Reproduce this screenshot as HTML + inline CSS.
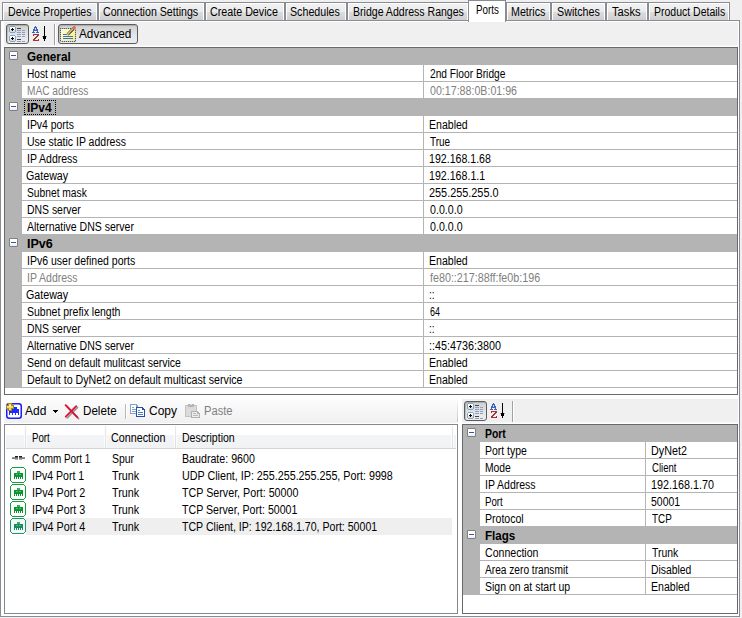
<!DOCTYPE html><html><head><meta charset="utf-8"><style>
*{box-sizing:border-box;margin:0;padding:0}
html,body{width:742px;height:618px;overflow:hidden;background:#f0f0f0;font-family:"Liberation Sans",sans-serif;font-size:12px;color:#000}
.a{position:absolute}
.t{position:absolute;white-space:nowrap;line-height:14px;transform-origin:0 0}
svg{position:absolute;overflow:visible}
</style></head><body>
<div class="a" style="left:2px;top:2px;width:96px;height:19px;border:1px solid #898c95;background:linear-gradient(#f2f2f2 0,#ebebeb 53%,#dddddd 53%,#cfcfcf 100%);box-shadow:inset 1px 1px 0 #fff,inset -1px 0 0 #fff"></div><div class="t" style="left:8px;top:5px;transform:scaleX(0.8811);">Device Properties</div><div class="a" style="left:98px;top:2px;width:107px;height:19px;border:1px solid #898c95;background:linear-gradient(#f2f2f2 0,#ebebeb 53%,#dddddd 53%,#cfcfcf 100%);box-shadow:inset 1px 1px 0 #fff,inset -1px 0 0 #fff"></div><div class="t" style="left:103px;top:5px;transform:scaleX(0.8863);">Connection Settings</div><div class="a" style="left:205px;top:2px;width:80px;height:19px;border:1px solid #898c95;background:linear-gradient(#f2f2f2 0,#ebebeb 53%,#dddddd 53%,#cfcfcf 100%);box-shadow:inset 1px 1px 0 #fff,inset -1px 0 0 #fff"></div><div class="t" style="left:210px;top:5px;transform:scaleX(0.8926);">Create Device</div><div class="a" style="left:285px;top:2px;width:62px;height:19px;border:1px solid #898c95;background:linear-gradient(#f2f2f2 0,#ebebeb 53%,#dddddd 53%,#cfcfcf 100%);box-shadow:inset 1px 1px 0 #fff,inset -1px 0 0 #fff"></div><div class="t" style="left:290px;top:5px;transform:scaleX(0.8899);">Schedules</div><div class="a" style="left:347px;top:2px;width:122px;height:19px;border:1px solid #898c95;background:linear-gradient(#f2f2f2 0,#ebebeb 53%,#dddddd 53%,#cfcfcf 100%);box-shadow:inset 1px 1px 0 #fff,inset -1px 0 0 #fff"></div><div class="t" style="left:353px;top:5px;transform:scaleX(0.8795);">Bridge Address Ranges</div><div class="a" style="left:506px;top:2px;width:45px;height:19px;border:1px solid #898c95;background:linear-gradient(#f2f2f2 0,#ebebeb 53%,#dddddd 53%,#cfcfcf 100%);box-shadow:inset 1px 1px 0 #fff,inset -1px 0 0 #fff"></div><div class="t" style="left:511px;top:5px;transform:scaleX(0.8904);">Metrics</div><div class="a" style="left:551px;top:2px;width:55px;height:19px;border:1px solid #898c95;background:linear-gradient(#f2f2f2 0,#ebebeb 53%,#dddddd 53%,#cfcfcf 100%);box-shadow:inset 1px 1px 0 #fff,inset -1px 0 0 #fff"></div><div class="t" style="left:557px;top:5px;transform:scaleX(0.8925);">Switches</div><div class="a" style="left:606px;top:2px;width:42px;height:19px;border:1px solid #898c95;background:linear-gradient(#f2f2f2 0,#ebebeb 53%,#dddddd 53%,#cfcfcf 100%);box-shadow:inset 1px 1px 0 #fff,inset -1px 0 0 #fff"></div><div class="t" style="left:612px;top:5px;transform:scaleX(0.9322);">Tasks</div><div class="a" style="left:648px;top:2px;width:82px;height:19px;border:1px solid #898c95;background:linear-gradient(#f2f2f2 0,#ebebeb 53%,#dddddd 53%,#cfcfcf 100%);box-shadow:inset 1px 1px 0 #fff,inset -1px 0 0 #fff"></div><div class="t" style="left:654px;top:5px;transform:scaleX(0.8742);">Product Details</div><div class="a" style="left:0;top:20px;width:740px;height:597px;border:1px solid #898c95;background:#fff"></div><div class="a" style="left:468px;top:0;width:38px;height:22px;border:1px solid #898c95;border-bottom:none;background:#fff"></div><div class="t" style="left:476px;top:3px;transform:scaleX(0.8131);">Ports</div><div class="a" style="left:4px;top:22px;width:734px;height:23px;background:#f0f0f0"></div><div class="a" style="left:4px;top:45px;width:734px;height:1px;background:#f3f6fb"></div><div class="a" style="left:6px;top:24px;width:23px;height:20px;border:1px solid #5c5c5c;border-radius:3px;background:linear-gradient(#cfcfcf,#e6e6e6 60%,#ededed);box-shadow:inset 1px 1px 1px rgba(0,0,0,.18)"></div><svg class="a" style="left:6px;top:24px" width="23" height="20" viewBox="0 0 23 20" shape-rendering="crispEdges"><rect x="4" y="2" width="5" height="7" fill="#7fa6cf"/><rect x="3" y="3" width="7" height="5" fill="#7fa6cf"/><rect x="4" y="3" width="5" height="5" fill="#fff"/><rect x="4" y="6" width="5" height="2" fill="#e8dccb"/><rect x="6" y="4" width="1" height="3" fill="#000"/><rect x="5" y="5" width="3" height="1" fill="#000"/><rect x="4" y="11" width="5" height="7" fill="#7fa6cf"/><rect x="3" y="12" width="7" height="5" fill="#7fa6cf"/><rect x="4" y="12" width="5" height="5" fill="#fff"/><rect x="4" y="15" width="5" height="2" fill="#e8dccb"/><rect x="6" y="13" width="1" height="3" fill="#000"/><rect x="5" y="14" width="3" height="1" fill="#000"/><rect x="11" y="4" width="4" height="1" fill="#444"/><rect x="11" y="15" width="4" height="1" fill="#444"/><rect x="11" y="6" width="4" height="1" fill="#8aa0c8"/><rect x="16" y="6" width="3" height="1" fill="#8aa0c8"/><rect x="11" y="8" width="4" height="1" fill="#8aa0c8"/><rect x="16" y="8" width="3" height="1" fill="#8aa0c8"/><rect x="11" y="10" width="4" height="1" fill="#8aa0c8"/><rect x="16" y="10" width="3" height="1" fill="#8aa0c8"/><rect x="11" y="12" width="4" height="1" fill="#8aa0c8"/><rect x="16" y="12" width="3" height="1" fill="#8aa0c8"/><rect x="11" y="17" width="4" height="1" fill="#8aa0c8"/><rect x="16" y="17" width="3" height="1" fill="#8aa0c8"/></svg><svg class="a" style="left:32px;top:26px" width="16" height="16" viewBox="0 0 16 16" shape-rendering="crispEdges"><rect x="3" y="0" width="1" height="1" fill="#3d66bb"/><rect x="2" y="1" width="3" height="1" fill="#3d66bb"/><rect x="2" y="2" width="1" height="1" fill="#3d66bb"/><rect x="4" y="2" width="1" height="1" fill="#3d66bb"/><rect x="1" y="3" width="2" height="1" fill="#3d66bb"/><rect x="4" y="3" width="2" height="1" fill="#3d66bb"/><rect x="1" y="4" width="5" height="1" fill="#3d66bb"/><rect x="1" y="5" width="1" height="1" fill="#3d66bb"/><rect x="5" y="5" width="1" height="1" fill="#3d66bb"/><rect x="0" y="6" width="3" height="1" fill="#3d66bb"/><rect x="4" y="6" width="3" height="1" fill="#3d66bb"/><rect x="3" y="2" width="1" height="1" fill="#c9d4ea"/><rect x="3" y="3" width="1" height="1" fill="#c9d4ea"/><rect x="1" y="8" width="6" height="1" fill="#a33434"/><rect x="5" y="9" width="2" height="1" fill="#a33434"/><rect x="1" y="9" width="1" height="1" fill="#a33434"/><rect x="4" y="10" width="2" height="1" fill="#a33434"/><rect x="3" y="11" width="2" height="1" fill="#a33434"/><rect x="2" y="12" width="2" height="1" fill="#a33434"/><rect x="1" y="13" width="2" height="1" fill="#a33434"/><rect x="6" y="13" width="1" height="1" fill="#a33434"/><rect x="1" y="14" width="6" height="1" fill="#a33434"/><rect x="12" y="0" width="1" height="1" fill="#000"/><rect x="12" y="1" width="1" height="1" fill="#000"/><rect x="12" y="2" width="1" height="1" fill="#000"/><rect x="12" y="3" width="1" height="1" fill="#000"/><rect x="12" y="4" width="1" height="1" fill="#000"/><rect x="12" y="5" width="1" height="1" fill="#000"/><rect x="12" y="6" width="1" height="1" fill="#000"/><rect x="12" y="7" width="1" height="1" fill="#000"/><rect x="12" y="8" width="1" height="1" fill="#000"/><rect x="12" y="9" width="1" height="1" fill="#000"/><rect x="11" y="11" width="3" height="1" fill="#000"/><rect x="11" y="12" width="3" height="1" fill="#000"/><rect x="12" y="13" width="1" height="1" fill="#000"/><rect x="12" y="14" width="1" height="1" fill="#000"/><rect x="11" y="10" width="3" height="1" fill="#000"/><rect x="10" y="10" width="1" height="1" fill="#9a9a9a"/><rect x="14" y="10" width="1" height="1" fill="#9a9a9a"/></svg><div class="a" style="left:54px;top:24px;width:1px;height:21px;background:#a0a0a0;box-shadow:1px 0 0 #fff"></div><div class="a" style="left:58px;top:24px;width:80px;height:20px;border:1px solid #5c5c5c;border-radius:3px;background:linear-gradient(#cfcfcf,#e6e6e6 60%,#ededed);box-shadow:inset 1px 1px 1px rgba(0,0,0,.18)"></div><svg class="a" style="left:60px;top:26px" width="17" height="16" viewBox="0 0 17 16" shape-rendering="crispEdges"><defs><linearGradient id="ny" x1="0" y1="0" x2="1" y2="1"><stop offset="0" stop-color="#ffffd8"/><stop offset="1" stop-color="#f6ee70"/></linearGradient></defs><rect x="1" y="3" width="14" height="12" fill="url(#ny)"/><rect x="0" y="2" width="1" height="1" fill="#4a5a80"/><rect x="0" y="15" width="1" height="1" fill="#4a5a80"/><rect x="2" y="2" width="1" height="1" fill="#4a5a80"/><rect x="2" y="15" width="1" height="1" fill="#4a5a80"/><rect x="4" y="2" width="1" height="1" fill="#4a5a80"/><rect x="4" y="15" width="1" height="1" fill="#4a5a80"/><rect x="6" y="2" width="1" height="1" fill="#4a5a80"/><rect x="6" y="15" width="1" height="1" fill="#4a5a80"/><rect x="8" y="2" width="1" height="1" fill="#4a5a80"/><rect x="8" y="15" width="1" height="1" fill="#4a5a80"/><rect x="10" y="2" width="1" height="1" fill="#4a5a80"/><rect x="10" y="15" width="1" height="1" fill="#4a5a80"/><rect x="12" y="2" width="1" height="1" fill="#4a5a80"/><rect x="12" y="15" width="1" height="1" fill="#4a5a80"/><rect x="14" y="2" width="1" height="1" fill="#4a5a80"/><rect x="14" y="15" width="1" height="1" fill="#4a5a80"/><rect x="0" y="2" width="1" height="1" fill="#4a5a80"/><rect x="15" y="2" width="1" height="1" fill="#4a5a80"/><rect x="0" y="4" width="1" height="1" fill="#4a5a80"/><rect x="15" y="4" width="1" height="1" fill="#4a5a80"/><rect x="0" y="6" width="1" height="1" fill="#4a5a80"/><rect x="15" y="6" width="1" height="1" fill="#4a5a80"/><rect x="0" y="8" width="1" height="1" fill="#4a5a80"/><rect x="15" y="8" width="1" height="1" fill="#4a5a80"/><rect x="0" y="10" width="1" height="1" fill="#4a5a80"/><rect x="15" y="10" width="1" height="1" fill="#4a5a80"/><rect x="0" y="12" width="1" height="1" fill="#4a5a80"/><rect x="15" y="12" width="1" height="1" fill="#4a5a80"/><rect x="0" y="14" width="1" height="1" fill="#4a5a80"/><rect x="15" y="14" width="1" height="1" fill="#4a5a80"/><rect x="1" y="2" width="1" height="1" fill="#b8c0d8"/><rect x="1" y="15" width="1" height="1" fill="#b8c0d8"/><rect x="3" y="2" width="1" height="1" fill="#b8c0d8"/><rect x="3" y="15" width="1" height="1" fill="#b8c0d8"/><rect x="5" y="2" width="1" height="1" fill="#b8c0d8"/><rect x="5" y="15" width="1" height="1" fill="#b8c0d8"/><rect x="7" y="2" width="1" height="1" fill="#b8c0d8"/><rect x="7" y="15" width="1" height="1" fill="#b8c0d8"/><rect x="9" y="2" width="1" height="1" fill="#b8c0d8"/><rect x="9" y="15" width="1" height="1" fill="#b8c0d8"/><rect x="11" y="2" width="1" height="1" fill="#b8c0d8"/><rect x="11" y="15" width="1" height="1" fill="#b8c0d8"/><rect x="13" y="2" width="1" height="1" fill="#b8c0d8"/><rect x="13" y="15" width="1" height="1" fill="#b8c0d8"/><rect x="15" y="2" width="1" height="1" fill="#b8c0d8"/><rect x="15" y="15" width="1" height="1" fill="#b8c0d8"/><rect x="0" y="3" width="1" height="1" fill="#b8c0d8"/><rect x="15" y="3" width="1" height="1" fill="#b8c0d8"/><rect x="0" y="5" width="1" height="1" fill="#b8c0d8"/><rect x="15" y="5" width="1" height="1" fill="#b8c0d8"/><rect x="0" y="7" width="1" height="1" fill="#b8c0d8"/><rect x="15" y="7" width="1" height="1" fill="#b8c0d8"/><rect x="0" y="9" width="1" height="1" fill="#b8c0d8"/><rect x="15" y="9" width="1" height="1" fill="#b8c0d8"/><rect x="0" y="11" width="1" height="1" fill="#b8c0d8"/><rect x="15" y="11" width="1" height="1" fill="#b8c0d8"/><rect x="0" y="13" width="1" height="1" fill="#b8c0d8"/><rect x="15" y="13" width="1" height="1" fill="#b8c0d8"/><rect x="0" y="15" width="1" height="1" fill="#b8c0d8"/><rect x="15" y="15" width="1" height="1" fill="#b8c0d8"/><rect x="3" y="8" width="5" height="1" fill="#3b6fd8"/><rect x="3" y="10" width="10" height="1" fill="#3b6fd8"/><rect x="3" y="12" width="10" height="1" fill="#3b6fd8"/></svg><svg class="a" style="left:60px;top:26px" width="17" height="16" viewBox="0 0 17 16"><path d="M7.6 8.4 L13.6 2.4" stroke="#1a1a1a" stroke-width="2.8"/><path d="M7.9 7.9 L13.2 2.6" stroke="#dcc46a" stroke-width="1.5"/><path d="M7.2 8.8 L9 7" stroke="#c8c8c8" stroke-width="1.6"/><circle cx="14.2" cy="1.8" r="1.8" fill="#e0705a"/></svg><div class="t" style="left:79px;top:27px;transform:scaleX(0.9810);">Advanced</div><div class="a" style="left:4px;top:47px;width:734px;height:348px;border:1px solid #696969;background:#fff"></div><div class="a" style="left:5px;top:48px;width:17px;height:340px;background:#b4b4b4"></div><div class="a" style="left:5px;top:48px;width:732px;height:17px;background:#b4b4b4"></div><div class="a" style="left:9px;top:51px;width:9px;height:9px;border:1px solid #808080;border-radius:1px;background:linear-gradient(#fff 60%,#e9e9e9)"></div><div class="a" style="left:11px;top:55px;width:5px;height:1px;background:#3a55a5"></div><div class="t" style="left:27px;top:50px;transform:scaleX(0.9770);font-weight:bold;">General</div><div class="a" style="left:22px;top:81px;width:715px;height:1px;background:#b4b4b4"></div><div class="a" style="left:423px;top:65px;width:1px;height:16px;background:#b4b4b4"></div><div class="t" style="left:27px;top:67px;transform:scaleX(0.8407);">Host name</div><div class="t" style="left:430px;top:67px;transform:scaleX(0.8499);">2nd Floor Bridge</div><div class="a" style="left:22px;top:98px;width:715px;height:1px;background:#b4b4b4"></div><div class="a" style="left:423px;top:82px;width:1px;height:16px;background:#b4b4b4"></div><div class="t" style="left:27px;top:84px;transform:scaleX(0.8440);color:#808080;">MAC address</div><div class="t" style="left:430px;top:84px;transform:scaleX(0.8872);color:#808080;">00:17:88:0B:01:96</div><div class="a" style="left:5px;top:99px;width:732px;height:17px;background:#b4b4b4"></div><div class="a" style="left:9px;top:102px;width:9px;height:9px;border:1px solid #808080;border-radius:1px;background:linear-gradient(#fff 60%,#e9e9e9)"></div><div class="a" style="left:11px;top:106px;width:5px;height:1px;background:#3a55a5"></div><div class="t" style="left:27px;top:101px;transform:scaleX(1.0000);font-weight:bold;">IPv4</div><div class="a" style="left:24px;top:100px;width:32px;height:15px;border:1px dotted #000"></div><div class="a" style="left:22px;top:132px;width:715px;height:1px;background:#b4b4b4"></div><div class="a" style="left:423px;top:116px;width:1px;height:16px;background:#b4b4b4"></div><div class="t" style="left:27px;top:118px;transform:scaleX(0.8671);">IPv4 ports</div><div class="t" style="left:429px;top:118px;transform:scaleX(0.8795);">Enabled</div><div class="a" style="left:22px;top:149px;width:715px;height:1px;background:#b4b4b4"></div><div class="a" style="left:423px;top:133px;width:1px;height:16px;background:#b4b4b4"></div><div class="t" style="left:27px;top:135px;transform:scaleX(0.8744);">Use static IP address</div><div class="t" style="left:430px;top:135px;transform:scaleX(0.8298);">True</div><div class="a" style="left:22px;top:166px;width:715px;height:1px;background:#b4b4b4"></div><div class="a" style="left:423px;top:150px;width:1px;height:16px;background:#b4b4b4"></div><div class="t" style="left:27px;top:152px;transform:scaleX(0.8739);">IP Address</div><div class="t" style="left:429px;top:152px;transform:scaleX(0.8832);">192.168.1.68</div><div class="a" style="left:22px;top:183px;width:715px;height:1px;background:#b4b4b4"></div><div class="a" style="left:423px;top:167px;width:1px;height:16px;background:#b4b4b4"></div><div class="t" style="left:26px;top:169px;transform:scaleX(0.8901);">Gateway</div><div class="t" style="left:429px;top:169px;transform:scaleX(0.8862);">192.168.1.1</div><div class="a" style="left:22px;top:200px;width:715px;height:1px;background:#b4b4b4"></div><div class="a" style="left:423px;top:184px;width:1px;height:16px;background:#b4b4b4"></div><div class="t" style="left:27px;top:186px;transform:scaleX(0.8540);">Subnet mask</div><div class="t" style="left:429px;top:186px;transform:scaleX(0.9060);">255.255.255.0</div><div class="a" style="left:22px;top:217px;width:715px;height:1px;background:#b4b4b4"></div><div class="a" style="left:423px;top:201px;width:1px;height:16px;background:#b4b4b4"></div><div class="t" style="left:27px;top:203px;transform:scaleX(0.8678);">DNS server</div><div class="t" style="left:430px;top:203px;transform:scaleX(0.8873);">0.0.0.0</div><div class="a" style="left:22px;top:234px;width:715px;height:1px;background:#b4b4b4"></div><div class="a" style="left:423px;top:218px;width:1px;height:16px;background:#b4b4b4"></div><div class="t" style="left:27px;top:220px;transform:scaleX(0.8765);">Alternative DNS server</div><div class="t" style="left:430px;top:220px;transform:scaleX(0.8873);">0.0.0.0</div><div class="a" style="left:5px;top:235px;width:732px;height:17px;background:#b4b4b4"></div><div class="a" style="left:9px;top:238px;width:9px;height:9px;border:1px solid #808080;border-radius:1px;background:linear-gradient(#fff 60%,#e9e9e9)"></div><div class="a" style="left:11px;top:242px;width:5px;height:1px;background:#3a55a5"></div><div class="t" style="left:27px;top:237px;transform:scaleX(1.0444);font-weight:bold;">IPv6</div><div class="a" style="left:22px;top:268px;width:715px;height:1px;background:#b4b4b4"></div><div class="a" style="left:423px;top:252px;width:1px;height:16px;background:#b4b4b4"></div><div class="t" style="left:27px;top:254px;transform:scaleX(0.8765);">IPv6 user defined ports</div><div class="t" style="left:429px;top:254px;transform:scaleX(0.8795);">Enabled</div><div class="a" style="left:22px;top:285px;width:715px;height:1px;background:#b4b4b4"></div><div class="a" style="left:423px;top:269px;width:1px;height:16px;background:#b4b4b4"></div><div class="t" style="left:27px;top:271px;transform:scaleX(0.8739);color:#808080;">IP Address</div><div class="t" style="left:430px;top:271px;transform:scaleX(0.8939);color:#808080;">fe80::217:88ff:fe0b:196</div><div class="a" style="left:22px;top:302px;width:715px;height:1px;background:#b4b4b4"></div><div class="a" style="left:423px;top:286px;width:1px;height:16px;background:#b4b4b4"></div><div class="t" style="left:26px;top:288px;transform:scaleX(0.8901);">Gateway</div><div class="t" style="left:429px;top:288px;transform:scaleX(0.8469);">::</div><div class="a" style="left:22px;top:319px;width:715px;height:1px;background:#b4b4b4"></div><div class="a" style="left:423px;top:303px;width:1px;height:16px;background:#b4b4b4"></div><div class="t" style="left:27px;top:305px;transform:scaleX(0.8756);">Subnet prefix length</div><div class="t" style="left:430px;top:305px;transform:scaleX(0.7474);">64</div><div class="a" style="left:22px;top:336px;width:715px;height:1px;background:#b4b4b4"></div><div class="a" style="left:423px;top:320px;width:1px;height:16px;background:#b4b4b4"></div><div class="t" style="left:27px;top:322px;transform:scaleX(0.8678);">DNS server</div><div class="t" style="left:429px;top:322px;transform:scaleX(0.8469);">::</div><div class="a" style="left:22px;top:353px;width:715px;height:1px;background:#b4b4b4"></div><div class="a" style="left:423px;top:337px;width:1px;height:16px;background:#b4b4b4"></div><div class="t" style="left:27px;top:339px;transform:scaleX(0.8765);">Alternative DNS server</div><div class="t" style="left:429px;top:339px;transform:scaleX(0.8981);">::45:4736:3800</div><div class="a" style="left:22px;top:370px;width:715px;height:1px;background:#b4b4b4"></div><div class="a" style="left:423px;top:354px;width:1px;height:16px;background:#b4b4b4"></div><div class="t" style="left:27px;top:356px;transform:scaleX(0.8739);">Send on default mulitcast service</div><div class="t" style="left:429px;top:356px;transform:scaleX(0.8795);">Enabled</div><div class="a" style="left:22px;top:387px;width:715px;height:1px;background:#b4b4b4"></div><div class="a" style="left:423px;top:371px;width:1px;height:16px;background:#b4b4b4"></div><div class="t" style="left:27px;top:373px;transform:scaleX(0.8877);">Default to DyNet2 on default multicast service</div><div class="t" style="left:429px;top:373px;transform:scaleX(0.8795);">Enabled</div><div class="a" style="left:4px;top:399px;width:454px;height:24px;background:linear-gradient(#fcfcfc,#f0f0f0);border-top-right-radius:3px;border-bottom-right-radius:3px"></div><div class="a" style="left:457px;top:401px;width:1px;height:21px;background:linear-gradient(#f4f4f4,#c4c4c4)"></div><svg class="a" style="left:6px;top:403px" width="16" height="16" viewBox="0 0 16 16"><rect x="0.75" y="0.75" width="14.5" height="14.5" rx="2.5" fill="#fff" stroke="#1b1bff" stroke-width="1.5"/></svg><svg class="a" style="left:6px;top:403px" width="16" height="16" viewBox="0 0 16 16" shape-rendering="crispEdges"><rect x="3" y="6" width="10" height="4" fill="#1a2cff"/><rect x="8" y="4" width="3" height="2" fill="#1a2cff"/><rect x="3" y="10" width="1" height="2" fill="#1a2cff"/><rect x="6" y="10" width="1" height="2" fill="#1a2cff"/><rect x="9" y="10" width="1" height="2" fill="#1a2cff"/><rect x="12" y="10" width="1" height="2" fill="#1a2cff"/><path d="M2 0h4v2h2v4h-2v2h-4v-2h-2v-4h2z" fill="#a88a10"/><path d="M3 1h2v2h2v2h-2v2h-2v-2h-2v-2h2z" fill="#f2dc5a"/><rect x="3" y="2" width="2" height="2" fill="#fff6c0"/></svg><div class="t" style="left:25px;top:404px;transform:scaleX(1.0000);">Add</div><svg class="a" style="left:53px;top:410px" width="5" height="3" shape-rendering="crispEdges"><rect x="0" y="0" width="5" height="1"/><rect x="1" y="1" width="3" height="1"/><rect x="2" y="2" width="1" height="1"/></svg><svg class="a" style="left:64px;top:404px" width="16" height="16" viewBox="0 0 16 16"><path d="M2.2 1.6 L13.8 13.8 M12.8 2.6 L2.4 13.2" stroke="#6a6a6a" stroke-width="1.6" stroke-linecap="round" transform="translate(0.8,0.8)" opacity=".7"/><path d="M1.6 1.2 L13.2 13.2 M12.2 2.2 L1.8 12.6" stroke="#e0103c" stroke-width="1.9" stroke-linecap="round"/></svg><div class="t" style="left:83px;top:404px;transform:scaleX(0.9692);">Delete</div><div class="a" style="left:125px;top:404px;width:1px;height:15px;background:#b8b8b8;box-shadow:1px 0 0 #fff"></div><svg class="a" style="left:130px;top:404px" width="16" height="16" viewBox="0 0 16 16" shape-rendering="crispEdges"><path d="M0 0h6l2 2v8h-8z" fill="#8da0bd"/><path d="M1 1h5v2h1v6h-6z" fill="#fff"/><rect x="2" y="3" width="2" height="1" fill="#78a4e0"/><rect x="2" y="5" width="4" height="1" fill="#78a4e0"/><rect x="2" y="7" width="4" height="1" fill="#78a4e0"/><path d="M6 3h6l3 3v7h-9z" fill="#2a4ea8"/><path d="M7 4h5v2h2v6h-7z" fill="#fff"/><rect x="8" y="6" width="2" height="1" fill="#5a8ee0"/><rect x="8" y="8" width="5" height="1" fill="#4a7ed8"/><rect x="8" y="10" width="5" height="1" fill="#4a7ed8"/></svg><div class="t" style="left:149px;top:404px;transform:scaleX(1.0000);">Copy</div><svg class="a" style="left:185px;top:404px" width="16" height="16" viewBox="0 0 16 16" shape-rendering="crispEdges"><rect x="0" y="1" width="12" height="12" fill="#c4c4c4"/><rect x="1" y="2" width="10" height="10" fill="#dadada"/><rect x="3" y="0" width="6" height="3" fill="#b4b4b4"/><rect x="5" y="0" width="2" height="1" fill="#e0e0e0"/><path d="M6 7h6l3 3v4h-9z" fill="#b0b0b0"/><path d="M7 8h5v2h2v3h-7z" fill="#ececec"/><rect x="8" y="9" width="3" height="1" fill="#b8b8b8"/><rect x="8" y="11" width="5" height="1" fill="#b8b8b8"/></svg><div class="t" style="left:204px;top:404px;transform:scaleX(0.9298);color:#7f7f7f;">Paste</div><div class="a" style="left:4px;top:424px;width:454px;height:190px;border:1px solid #828790;background:#fff"></div><div class="a" style="left:6px;top:425px;width:450px;height:24px;background:linear-gradient(#fff 0,#fff 44%,#f3f4f6 44%,#f1f2f4 100%);border-bottom:1px solid #d5d5d5"></div><div class="a" style="left:25px;top:426px;width:1px;height:22px;background:linear-gradient(#ececec,#dcdde0);box-shadow:1px 0 0 #fcfcfc,-1px 0 0 #fcfcfc"></div><div class="a" style="left:105px;top:426px;width:1px;height:22px;background:linear-gradient(#ececec,#dcdde0);box-shadow:1px 0 0 #fcfcfc,-1px 0 0 #fcfcfc"></div><div class="a" style="left:175px;top:426px;width:1px;height:22px;background:linear-gradient(#ececec,#dcdde0);box-shadow:1px 0 0 #fcfcfc,-1px 0 0 #fcfcfc"></div><div class="a" style="left:452px;top:426px;width:1px;height:22px;background:linear-gradient(#ececec,#dcdde0);box-shadow:1px 0 0 #fcfcfc,-1px 0 0 #fcfcfc"></div><div class="t" style="left:32px;top:431px;transform:scaleX(0.8049);">Port</div><div class="t" style="left:111px;top:431px;transform:scaleX(0.8974);">Connection</div><div class="t" style="left:182px;top:431px;transform:scaleX(0.8783);">Description</div><div class="a" style="left:26px;top:518px;width:426px;height:17px;background:#efefef"></div><div class="t" style="left:32px;top:452px;transform:scaleX(0.8251);">Comm Port 1</div><div class="t" style="left:112px;top:452px;transform:scaleX(0.8723);">Spur</div><div class="t" style="left:182px;top:452px;transform:scaleX(0.8882);">Baudrate: 9600</div><svg class="a" style="left:12px;top:455px" width="14" height="6" viewBox="0 0 14 6" shape-rendering="crispEdges"><rect x="3" y="1" width="3" height="1" fill="#1e1e1e"/><rect x="3" y="2" width="3" height="1" fill="#5a5a5a"/><rect x="3" y="3" width="3" height="1" fill="#8a8a8a"/><rect x="3" y="4" width="3" height="1" fill="#a8a8a8"/><rect x="7" y="1" width="3" height="1" fill="#1e1e1e"/><rect x="7" y="2" width="3" height="1" fill="#5a5a5a"/><rect x="7" y="3" width="3" height="1" fill="#8a8a8a"/><rect x="7" y="4" width="3" height="1" fill="#a8a8a8"/><rect x="0" y="2" width="3" height="1" fill="#9a9a9a"/><rect x="0" y="3" width="3" height="1" fill="#7a7a7a"/><rect x="10" y="2" width="3" height="1" fill="#9a9a9a"/><rect x="10" y="3" width="3" height="1" fill="#7a7a7a"/></svg><div class="t" style="left:32px;top:469px;transform:scaleX(0.8783);">IPv4 Port 1</div><div class="t" style="left:112px;top:469px;transform:scaleX(0.8983);">Trunk</div><div class="t" style="left:182px;top:469px;transform:scaleX(0.8934);">UDP Client, IP: 255.255.255.255, Port: 9998</div><svg class="a" style="left:10px;top:467px" width="16" height="16" viewBox="0 0 16 16" shape-rendering="crispEdges"><rect x="1" y="1" width="14" height="14" fill="#fff"/><rect x="2" y="0" width="12" height="1" fill="#12a03a"/><rect x="2" y="15" width="12" height="1" fill="#12a03a"/><rect x="0" y="2" width="1" height="12" fill="#12a03a"/><rect x="15" y="2" width="1" height="12" fill="#12a03a"/><rect x="1" y="1" width="1" height="1" fill="#12a03a"/><rect x="14" y="1" width="1" height="1" fill="#12a03a"/><rect x="1" y="14" width="1" height="1" fill="#12a03a"/><rect x="14" y="14" width="1" height="1" fill="#12a03a"/><rect x="4" y="6" width="9" height="4" fill="#0d9432"/><rect x="7" y="4" width="3" height="2" fill="#3cb060"/><rect x="4" y="10" width="1" height="2" fill="#0d9432"/><rect x="6" y="10" width="1" height="2" fill="#0d9432"/><rect x="8" y="10" width="1" height="2" fill="#0d9432"/><rect x="10" y="10" width="1" height="2" fill="#0d9432"/><rect x="12" y="10" width="1" height="2" fill="#0d9432"/><rect x="6" y="7" width="2" height="1" fill="#4cc070"/><rect x="9" y="7" width="2" height="1" fill="#4cc070"/></svg><div class="t" style="left:32px;top:486px;transform:scaleX(0.8957);">IPv4 Port 2</div><div class="t" style="left:112px;top:486px;transform:scaleX(0.8983);">Trunk</div><div class="t" style="left:182px;top:486px;transform:scaleX(0.8919);">TCP Server, Port: 50000</div><svg class="a" style="left:10px;top:484px" width="16" height="16" viewBox="0 0 16 16" shape-rendering="crispEdges"><rect x="1" y="1" width="14" height="14" fill="#fff"/><rect x="2" y="0" width="12" height="1" fill="#12a03a"/><rect x="2" y="15" width="12" height="1" fill="#12a03a"/><rect x="0" y="2" width="1" height="12" fill="#12a03a"/><rect x="15" y="2" width="1" height="12" fill="#12a03a"/><rect x="1" y="1" width="1" height="1" fill="#12a03a"/><rect x="14" y="1" width="1" height="1" fill="#12a03a"/><rect x="1" y="14" width="1" height="1" fill="#12a03a"/><rect x="14" y="14" width="1" height="1" fill="#12a03a"/><rect x="4" y="6" width="9" height="4" fill="#0d9432"/><rect x="7" y="4" width="3" height="2" fill="#3cb060"/><rect x="4" y="10" width="1" height="2" fill="#0d9432"/><rect x="6" y="10" width="1" height="2" fill="#0d9432"/><rect x="8" y="10" width="1" height="2" fill="#0d9432"/><rect x="10" y="10" width="1" height="2" fill="#0d9432"/><rect x="12" y="10" width="1" height="2" fill="#0d9432"/><rect x="6" y="7" width="2" height="1" fill="#4cc070"/><rect x="9" y="7" width="2" height="1" fill="#4cc070"/></svg><div class="t" style="left:32px;top:503px;transform:scaleX(0.8957);">IPv4 Port 3</div><div class="t" style="left:112px;top:503px;transform:scaleX(0.8983);">Trunk</div><div class="t" style="left:182px;top:503px;transform:scaleX(0.8842);">TCP Server, Port: 50001</div><svg class="a" style="left:10px;top:501px" width="16" height="16" viewBox="0 0 16 16" shape-rendering="crispEdges"><rect x="1" y="1" width="14" height="14" fill="#fff"/><rect x="2" y="0" width="12" height="1" fill="#12a03a"/><rect x="2" y="15" width="12" height="1" fill="#12a03a"/><rect x="0" y="2" width="1" height="12" fill="#12a03a"/><rect x="15" y="2" width="1" height="12" fill="#12a03a"/><rect x="1" y="1" width="1" height="1" fill="#12a03a"/><rect x="14" y="1" width="1" height="1" fill="#12a03a"/><rect x="1" y="14" width="1" height="1" fill="#12a03a"/><rect x="14" y="14" width="1" height="1" fill="#12a03a"/><rect x="4" y="6" width="9" height="4" fill="#0d9432"/><rect x="7" y="4" width="3" height="2" fill="#3cb060"/><rect x="4" y="10" width="1" height="2" fill="#0d9432"/><rect x="6" y="10" width="1" height="2" fill="#0d9432"/><rect x="8" y="10" width="1" height="2" fill="#0d9432"/><rect x="10" y="10" width="1" height="2" fill="#0d9432"/><rect x="12" y="10" width="1" height="2" fill="#0d9432"/><rect x="6" y="7" width="2" height="1" fill="#4cc070"/><rect x="9" y="7" width="2" height="1" fill="#4cc070"/></svg><div class="t" style="left:32px;top:520px;transform:scaleX(0.8957);">IPv4 Port 4</div><div class="t" style="left:112px;top:520px;transform:scaleX(0.8983);">Trunk</div><div class="t" style="left:182px;top:520px;transform:scaleX(0.8821);">TCP Client, IP: 192.168.1.70, Port: 50001</div><svg class="a" style="left:10px;top:518px" width="16" height="16" viewBox="0 0 16 16" shape-rendering="crispEdges"><rect x="1" y="1" width="14" height="14" fill="#f3f7fc"/><rect x="2" y="0" width="12" height="1" fill="#1a9a6a"/><rect x="2" y="15" width="12" height="1" fill="#1a9a6a"/><rect x="0" y="2" width="1" height="12" fill="#1a9a6a"/><rect x="15" y="2" width="1" height="12" fill="#1a9a6a"/><rect x="1" y="1" width="1" height="1" fill="#1a9a6a"/><rect x="14" y="1" width="1" height="1" fill="#1a9a6a"/><rect x="1" y="14" width="1" height="1" fill="#1a9a6a"/><rect x="14" y="14" width="1" height="1" fill="#1a9a6a"/><rect x="4" y="6" width="9" height="4" fill="#1a8a5a"/><rect x="7" y="4" width="3" height="2" fill="#3cb060"/><rect x="4" y="10" width="1" height="2" fill="#1a8a5a"/><rect x="6" y="10" width="1" height="2" fill="#1a8a5a"/><rect x="8" y="10" width="1" height="2" fill="#1a8a5a"/><rect x="10" y="10" width="1" height="2" fill="#1a8a5a"/><rect x="12" y="10" width="1" height="2" fill="#1a8a5a"/><rect x="6" y="7" width="2" height="1" fill="#4cc070"/><rect x="9" y="7" width="2" height="1" fill="#4cc070"/></svg><div class="a" style="left:462px;top:399px;width:276px;height:23px;background:#f0f0f0"></div><div class="a" style="left:462px;top:422px;width:276px;height:1px;background:#f3f6fb"></div><div class="a" style="left:464px;top:401px;width:23px;height:20px;border:1px solid #5c5c5c;border-radius:3px;background:linear-gradient(#cfcfcf,#e6e6e6 60%,#ededed);box-shadow:inset 1px 1px 1px rgba(0,0,0,.18)"></div><svg class="a" style="left:464px;top:401px" width="23" height="20" viewBox="0 0 23 20" shape-rendering="crispEdges"><rect x="4" y="2" width="5" height="7" fill="#7fa6cf"/><rect x="3" y="3" width="7" height="5" fill="#7fa6cf"/><rect x="4" y="3" width="5" height="5" fill="#fff"/><rect x="4" y="6" width="5" height="2" fill="#e8dccb"/><rect x="6" y="4" width="1" height="3" fill="#000"/><rect x="5" y="5" width="3" height="1" fill="#000"/><rect x="4" y="11" width="5" height="7" fill="#7fa6cf"/><rect x="3" y="12" width="7" height="5" fill="#7fa6cf"/><rect x="4" y="12" width="5" height="5" fill="#fff"/><rect x="4" y="15" width="5" height="2" fill="#e8dccb"/><rect x="6" y="13" width="1" height="3" fill="#000"/><rect x="5" y="14" width="3" height="1" fill="#000"/><rect x="11" y="4" width="4" height="1" fill="#444"/><rect x="11" y="15" width="4" height="1" fill="#444"/><rect x="11" y="6" width="4" height="1" fill="#8aa0c8"/><rect x="16" y="6" width="3" height="1" fill="#8aa0c8"/><rect x="11" y="8" width="4" height="1" fill="#8aa0c8"/><rect x="16" y="8" width="3" height="1" fill="#8aa0c8"/><rect x="11" y="10" width="4" height="1" fill="#8aa0c8"/><rect x="16" y="10" width="3" height="1" fill="#8aa0c8"/><rect x="11" y="12" width="4" height="1" fill="#8aa0c8"/><rect x="16" y="12" width="3" height="1" fill="#8aa0c8"/><rect x="11" y="17" width="4" height="1" fill="#8aa0c8"/><rect x="16" y="17" width="3" height="1" fill="#8aa0c8"/></svg><svg class="a" style="left:490px;top:403px" width="16" height="16" viewBox="0 0 16 16" shape-rendering="crispEdges"><rect x="3" y="0" width="1" height="1" fill="#3d66bb"/><rect x="2" y="1" width="3" height="1" fill="#3d66bb"/><rect x="2" y="2" width="1" height="1" fill="#3d66bb"/><rect x="4" y="2" width="1" height="1" fill="#3d66bb"/><rect x="1" y="3" width="2" height="1" fill="#3d66bb"/><rect x="4" y="3" width="2" height="1" fill="#3d66bb"/><rect x="1" y="4" width="5" height="1" fill="#3d66bb"/><rect x="1" y="5" width="1" height="1" fill="#3d66bb"/><rect x="5" y="5" width="1" height="1" fill="#3d66bb"/><rect x="0" y="6" width="3" height="1" fill="#3d66bb"/><rect x="4" y="6" width="3" height="1" fill="#3d66bb"/><rect x="3" y="2" width="1" height="1" fill="#c9d4ea"/><rect x="3" y="3" width="1" height="1" fill="#c9d4ea"/><rect x="1" y="8" width="6" height="1" fill="#a33434"/><rect x="5" y="9" width="2" height="1" fill="#a33434"/><rect x="1" y="9" width="1" height="1" fill="#a33434"/><rect x="4" y="10" width="2" height="1" fill="#a33434"/><rect x="3" y="11" width="2" height="1" fill="#a33434"/><rect x="2" y="12" width="2" height="1" fill="#a33434"/><rect x="1" y="13" width="2" height="1" fill="#a33434"/><rect x="6" y="13" width="1" height="1" fill="#a33434"/><rect x="1" y="14" width="6" height="1" fill="#a33434"/><rect x="12" y="0" width="1" height="1" fill="#000"/><rect x="12" y="1" width="1" height="1" fill="#000"/><rect x="12" y="2" width="1" height="1" fill="#000"/><rect x="12" y="3" width="1" height="1" fill="#000"/><rect x="12" y="4" width="1" height="1" fill="#000"/><rect x="12" y="5" width="1" height="1" fill="#000"/><rect x="12" y="6" width="1" height="1" fill="#000"/><rect x="12" y="7" width="1" height="1" fill="#000"/><rect x="12" y="8" width="1" height="1" fill="#000"/><rect x="12" y="9" width="1" height="1" fill="#000"/><rect x="11" y="11" width="3" height="1" fill="#000"/><rect x="11" y="12" width="3" height="1" fill="#000"/><rect x="12" y="13" width="1" height="1" fill="#000"/><rect x="12" y="14" width="1" height="1" fill="#000"/><rect x="11" y="10" width="3" height="1" fill="#000"/><rect x="10" y="10" width="1" height="1" fill="#9a9a9a"/><rect x="14" y="10" width="1" height="1" fill="#9a9a9a"/></svg><div class="a" style="left:512px;top:401px;width:1px;height:21px;background:#a0a0a0;box-shadow:1px 0 0 #fff"></div><div class="a" style="left:462px;top:424px;width:276px;height:190px;border:1px solid #696969;background:#fff"></div><div class="a" style="left:463px;top:425px;width:17px;height:170px;background:#b4b4b4"></div><div class="a" style="left:463px;top:425px;width:274px;height:17px;background:#b4b4b4"></div><div class="a" style="left:467px;top:428px;width:9px;height:9px;border:1px solid #808080;border-radius:1px;background:linear-gradient(#fff 60%,#e9e9e9)"></div><div class="a" style="left:469px;top:432px;width:5px;height:1px;background:#3a55a5"></div><div class="t" style="left:485px;top:427px;transform:scaleX(0.8667);font-weight:bold;">Port</div><div class="a" style="left:480px;top:458px;width:257px;height:1px;background:#b4b4b4"></div><div class="a" style="left:645px;top:442px;width:1px;height:16px;background:#b4b4b4"></div><div class="t" style="left:485px;top:444px;transform:scaleX(0.8715);">Port type</div><div class="t" style="left:651px;top:444px;transform:scaleX(0.8961);">DyNet2</div><div class="a" style="left:480px;top:475px;width:257px;height:1px;background:#b4b4b4"></div><div class="a" style="left:645px;top:459px;width:1px;height:16px;background:#b4b4b4"></div><div class="t" style="left:485px;top:461px;transform:scaleX(0.8611);">Mode</div><div class="t" style="left:652px;top:461px;transform:scaleX(0.7966);">Client</div><div class="a" style="left:480px;top:492px;width:257px;height:1px;background:#b4b4b4"></div><div class="a" style="left:645px;top:476px;width:1px;height:16px;background:#b4b4b4"></div><div class="t" style="left:485px;top:478px;transform:scaleX(0.8739);">IP Address</div><div class="t" style="left:651px;top:478px;transform:scaleX(0.8978);">192.168.1.70</div><div class="a" style="left:480px;top:509px;width:257px;height:1px;background:#b4b4b4"></div><div class="a" style="left:645px;top:493px;width:1px;height:16px;background:#b4b4b4"></div><div class="t" style="left:485px;top:495px;transform:scaleX(0.8049);">Port</div><div class="t" style="left:651px;top:495px;transform:scaleX(0.8730);">50001</div><div class="a" style="left:480px;top:526px;width:257px;height:1px;background:#b4b4b4"></div><div class="a" style="left:645px;top:510px;width:1px;height:16px;background:#b4b4b4"></div><div class="t" style="left:485px;top:512px;transform:scaleX(0.8795);">Protocol</div><div class="t" style="left:652px;top:512px;transform:scaleX(0.8222);">TCP</div><div class="a" style="left:463px;top:527px;width:274px;height:17px;background:#b4b4b4"></div><div class="a" style="left:467px;top:530px;width:9px;height:9px;border:1px solid #808080;border-radius:1px;background:linear-gradient(#fff 60%,#e9e9e9)"></div><div class="a" style="left:469px;top:534px;width:5px;height:1px;background:#3a55a5"></div><div class="t" style="left:485px;top:529px;transform:scaleX(0.9661);font-weight:bold;">Flags</div><div class="a" style="left:480px;top:560px;width:257px;height:1px;background:#b4b4b4"></div><div class="a" style="left:645px;top:544px;width:1px;height:16px;background:#b4b4b4"></div><div class="t" style="left:485px;top:546px;transform:scaleX(0.8803);">Connection</div><div class="t" style="left:652px;top:546px;transform:scaleX(0.8644);">Trunk</div><div class="a" style="left:480px;top:577px;width:257px;height:1px;background:#b4b4b4"></div><div class="a" style="left:645px;top:561px;width:1px;height:16px;background:#b4b4b4"></div><div class="t" style="left:485px;top:563px;transform:scaleX(0.8462);">Area zero transmit</div><div class="t" style="left:651px;top:563px;transform:scaleX(0.8652);">Disabled</div><div class="a" style="left:480px;top:594px;width:257px;height:1px;background:#b4b4b4"></div><div class="a" style="left:645px;top:578px;width:1px;height:16px;background:#b4b4b4"></div><div class="t" style="left:485px;top:580px;transform:scaleX(0.8743);">Sign on at start up</div><div class="t" style="left:651px;top:580px;transform:scaleX(0.8795);">Enabled</div></body></html>
